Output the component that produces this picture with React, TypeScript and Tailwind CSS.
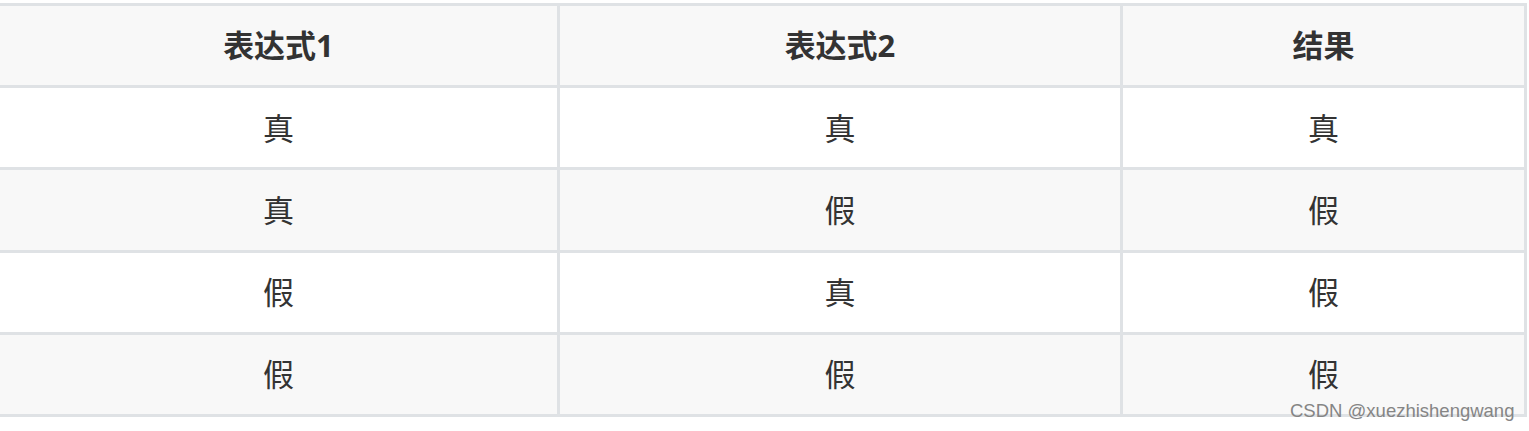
import { memo } from "react";

const rows: [string, string, string][] = [
    ["真", "真", "真"],
    ["真", "假", "假"],
    ["假", "真", "假"],
    ["假", "假", "假"],
]

function App() {
    return (
        <div className="relative w-[1529px] h-[431px] bg-white pt-[3px]" style={{ fontFamily: '"Open Sans", "Noto Sans CJK SC", sans-serif' }}>
            <div className="grid w-[1527px] grid-cols-[557px_560px_401px] auto-rows-[79.2px] gap-[3px] bg-[#dfe2e5] pt-[3px] pr-[3px] pb-[3px] text-[#333333]">
                <div className="flex items-center justify-center bg-[#f8f8f8] text-[31px] font-bold">表达式1</div>
                <div className="flex items-center justify-center bg-[#f8f8f8] text-[31px] font-bold">表达式2</div>
                <div className="flex items-center justify-center bg-[#f8f8f8] text-[31px] font-bold">结果</div>
                {rows.map((r, i) => r.map((c, j) => (
                    <div key={i + "-" + j} className={"flex items-center justify-center text-[31px] " + (i % 2 === 1 ? "bg-[#f8f8f8]" : "bg-white")}>{c}</div>
                )))}
            </div>
            <span className="absolute left-[1290px] top-[398px] text-[18.5px] leading-[26px] text-[#858585]" style={{ fontFamily: '"Liberation Sans", Arial, sans-serif' }}>CSDN @xuezhishengwang</span>
        </div>
    );
}

export default memo(App);
